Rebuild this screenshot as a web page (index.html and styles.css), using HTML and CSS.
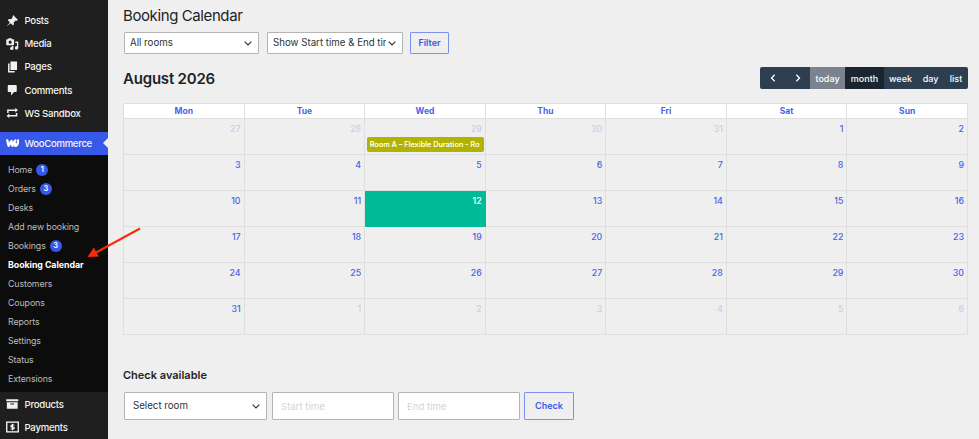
FILE: index.html
```
<!DOCTYPE html>
<html lang="en">
<head>
  <meta charset="UTF-8" />
  <meta name="viewport" content="width=device-width, initial-scale=1.0"/>
  <title>Booking Calendar</title>
  <link rel="stylesheet" href="styles.css">
</head>
<body>
  <aside class="sidebar">
    <ul class="menu">
      <li><a href="#"><svg viewBox="0 0 20 20"><path d="M10.400 3l1-2.900 8.300 8.300-2.900 1-1.100-.2-3.300 3.300.3 3.300-1.300 1.900-4.100-4.100L.5 19.300l5.500-7L2.600 8.200l1.900-1.400 3.300.3L10.600 4z"/></svg>Posts</a></li>
      <li><a href="#"><svg viewBox="0 0 20 20"><path fill-rule="evenodd" d="M1 2h2l1-1.700h4.500L9.500 2H12c.6 0 1 .4 1 1v8c0 .6-.4 1-1 1H1c-.6 0-1-.4-1-1V3c0-.6.4-1 1-1zM6.500 4.300a2.600 2.600 0 1 0 0 5.200 2.600 2.600 0 0 0 0-5.200z"/><path d="M15 6h5v10.500a2.800 2.800 0 1 1-2.200-2.700V8.500H15z"/><path d="M9.500 13.500H12v3.700a2.800 2.800 0 1 1-2.500-2.700z"/></svg>Media</a></li>
      <li><a href="#"><svg viewBox="0 0 20 20"><path d="M7 1h11v14H7zM3 4h2.500v12.500H14V19H3z"/></svg>Pages</a></li>
      <li><a href="#"><svg viewBox="0 0 20 20"><path d="M4.500 1.500h11c1.100 0 2 .9 2 2v8c0 1.100-.9 2-2 2H13L8 19v-5.500H4.500c-1.100 0-2-.9-2-2v-8c0-1.100.9-2 2-2z"/></svg>Comments</a></li>
      <li><a href="#"><svg viewBox="0 0 20 20"><path d="M1.500 10V4H15V1.500l4.500 3.700L15 9V6.500H4V10zM18.500 10v6H5v2.500L.5 14.800 5 11v2.500h11V10z"/></svg>WS Sandbox</a></li>
      <li class="current"><a href="#"><svg class="woo" viewBox="0 0 26 16"><path d="M2.500 2.500L5 13l5.500-9.500L12.500 13C13.500 8 15.500 4.500 18 2.500" fill="none" stroke="#fff" stroke-width="4.500" stroke-linejoin="round" stroke-linecap="round"/><path d="M23.500 2.500c0 5-2 9.500-4.500 10.500-1.800.4-2.200-2-1.200-5" fill="none" stroke="#fff" stroke-width="4.500" stroke-linecap="round"/></svg>WooCommerce</a></li>
    </ul>
    <ul class="submenu">
      <li><a href="#">Home <span class="count">1</span></a></li>
      <li><a href="#">Orders <span class="count">3</span></a></li>
      <li><a href="#">Desks</a></li>
      <li><a href="#">Add new booking</a></li>
      <li><a href="#">Bookings <span class="count">3</span></a></li>
      <li class="active"><a href="#">Booking Calendar</a></li>
      <li><a href="#">Customers</a></li>
      <li><a href="#">Coupons</a></li>
      <li><a href="#">Reports</a></li>
      <li><a href="#">Settings</a></li>
      <li><a href="#">Status</a></li>
      <li><a href="#">Extensions</a></li>
    </ul>
    <ul class="menu menu-bottom">
      <li><a href="#"><svg viewBox="0 0 20 20"><path fill-rule="evenodd" d="M0 2h20v3.500H0zM1 7h18v11H1zM7 9v2h6V9z"/></svg>Products</a></li>
      <li><a href="#"><svg class="pay" viewBox="0 0 14 12"><path d="M.8.8h12.400v10.400H.8z" fill="none" stroke="#fff" stroke-width="1.400"/><path d="M9 3.800H6.300Q5.200 3.800 5.200 4.900T6.300 6h1.500Q8.900 6 8.900 7.100T7.800 8.200H5M7 2.600v6.800" fill="none" stroke="#fff" stroke-width="1.200"/></svg>Payments</a></li>
    </ul>
  </aside>

  <main class="content">
    <h1>Booking Calendar</h1>

    <form class="filters">
      <div class="select">
        <select><option>All rooms</option></select>
        <svg viewBox="0 0 8 5"><path d="M.7.7L4 4 7.300.7"/></svg>
      </div>
      <div class="select select-wide">
        <select><option>Show Start time &amp; End time</option></select>
        <svg viewBox="0 0 8 5"><path d="M.7.7L4 4 7.300.7"/></svg>
      </div>
      <button type="button" class="btn">Filter</button>
    </form>

    <div class="toolbar">
      <h2>August 2026</h2>
      <div class="btn-group">
        <button class="nav"><svg viewBox="0 0 6 8"><path d="M4.700.8L1.500 4l3.200 3.200"/></svg></button>
        <button class="nav"><svg viewBox="0 0 6 8"><path d="M1.300.8L4.500 4 1.300 7.200"/></svg></button>
        <button class="today-btn">today</button>
        <button class="month-btn">month</button>
        <button class="week-btn">week</button>
        <button class="day-btn">day</button>
        <button class="list-btn">list</button>
      </div>
    </div>

    <table class="calendar">
      <thead>
        <tr><th>Mon</th><th>Tue</th><th>Wed</th><th>Thu</th><th>Fri</th><th>Sat</th><th>Sun</th></tr>
      </thead>
      <tbody>
        <tr>
          <td class="other">27</td><td class="other">28</td>
          <td><span class="muted">29</span><div class="event"><div class="event-title">Room A – Flexible Duration - Ro</div></div></td>
          <td class="other">30</td><td class="other">31</td><td>1</td><td>2</td>
        </tr>
        <tr><td>3</td><td>4</td><td>5</td><td>6</td><td>7</td><td>8</td><td>9</td></tr>
        <tr><td>10</td><td>11</td><td class="today">12</td><td>13</td><td>14</td><td>15</td><td>16</td></tr>
        <tr><td>17</td><td>18</td><td>19</td><td>20</td><td>21</td><td>22</td><td>23</td></tr>
        <tr><td>24</td><td>25</td><td>26</td><td>27</td><td>28</td><td>29</td><td>30</td></tr>
        <tr><td>31</td><td class="other">1</td><td class="other">2</td><td class="other">3</td><td class="other">4</td><td class="other">5</td><td class="other">6</td></tr>
      </tbody>
    </table>

    <h3>Check available</h3>
    <form class="check-form">
      <div class="select">
        <select><option>Select room</option></select>
        <svg viewBox="0 0 8 5"><path d="M.7.7L4 4 7.300.7"/></svg>
      </div>
      <input type="text" placeholder="Start time" />
      <input type="text" placeholder="End time" />
      <button type="button" class="btn">Check</button>
    </form>
  </main>

  <!-- arrow pointing at the active submenu item -->
  <svg class="arrow" viewBox="0 0 54 32"><path d="M53 1.500L9 25.500" stroke="#fc2a0a" stroke-width="2"/><path d="M.5 30l6.300-9.500 5 9z" fill="#fc2a0a"/></svg>
</body>
</html>
```
FILE: styles.css
```
* {
  margin: 0;
  padding: 0;
  box-sizing: border-box;
}

body {
  display: flex;
  position: relative;
  height: 439px;
  overflow: hidden;
  background: #efefef;
  color: #1d2327;
  font-family: Inter, sans-serif;
}

ul {
  list-style: none;
}

a {
  color: inherit;
  text-decoration: none;
}

button, input, select {
  font-family: inherit;
}

.sidebar {
  width: 108px;
  flex: none;
  background: #1f1f1f;
  color: #f4f4f4;
}

.menu {
  padding-top: 9px;
}

.menu a {
  display: flex;
  align-items: center;
  gap: 6px;
  height: 23.2px;
  padding-left: 6px;
  font-size: 9.6px;
  font-weight: 500;
  letter-spacing: -0.25px;
}

.menu svg {
  width: 12.5px;
  height: 12px;
  fill: #f0f0f0;
}

.menu .woo {
  width: 13.5px;
  height: 8.5px;
  margin: 0 -0.5px;
}

.menu .pay {
  width: 13px;
  margin-right: -0.5px;
}

.menu .current {
  position: relative;
  margin-top: 7px;
  background: #3858e9;
}

.menu .current a {
  letter-spacing: -0.32px;
}

.menu .current::after {
  content: "";
  position: absolute;
  right: 0;
  top: 6px;
  border: 5.5px solid transparent;
  border-right-color: #efefef;
  border-left: 0;
}

.submenu {
  height: 237px;
  padding: 5px 0 4px 8px;
  background: #0c0c0c;
  color: #bdbdbd;
}

.submenu a {
  display: flex;
  align-items: center;
  gap: 4px;
  height: 19.03px;
  font-size: 8.8px;
  letter-spacing: -0.1px;
}

.submenu .active {
  color: #fff;
  font-weight: 700;
}

.submenu .active a {
  letter-spacing: -0.04px;
}

.count {
  width: 12px;
  height: 12px;
  border-radius: 50%;
  background: #3858e9;
  color: #fff;
  font-size: 7.5px;
  font-weight: 600;
  line-height: 12px;
  letter-spacing: 0;
  text-align: center;
}

.menu-bottom {
  padding-top: 0.5px;
}

.content {
  flex: 1;
  padding: 6px 11px 0 15px;
}

h1 {
  height: 26px;
  font-size: 15px;
  font-weight: 400;
  line-height: 20px;
  letter-spacing: -0.4px;
}

.filters {
  display: flex;
  gap: 8px;
  padding-left: 1px;
}

.select {
  position: relative;
  width: 135px;
  height: 22px;
}

.select-wide {
  width: 136px;
}

.select select {
  display: block;
  width: 100%;
  height: 100%;
  padding: 0 16px 1px 5px;
  border: 1px solid #b4b4b4;
  border-radius: 1px;
  background: #fff;
  color: #2c3338;
  font-size: 9.7px;
  appearance: none;
}

.select svg {
  position: absolute;
  right: 7px;
  top: 50%;
  width: 8px;
  height: 5px;
  margin-top: -2px;
  fill: none;
  stroke: #333;
  stroke-width: 1.2;
}

.btn {
  width: 39px;
  padding-bottom: 1px;
  border: 1px solid #7c91f0;
  border-radius: 1px;
  background: transparent;
  color: #3858e9;
  font-size: 9px;
  font-weight: 600;
}

.filters .btn {
  margin-left: -1px;
}

.toolbar {
  display: flex;
  justify-content: space-between;
  align-items: center;
  height: 22px;
  margin: 13px 0 14px;
}

h2 {
  font-size: 15px;
  font-weight: 600;
  letter-spacing: -0.2px;
}

.btn-group {
  display: flex;
  height: 22px;
  border-radius: 2px;
  overflow: hidden;
}

.btn-group button {
  border: 0;
  background: #2c3e50;
  color: #fff;
  font-size: 9px;
  font-weight: 500;
}

.btn-group .nav {
  width: 25px;
}

.nav svg {
  width: 6px;
  height: 8px;
  margin-top: 1px;
  fill: none;
  stroke: #fff;
  stroke-width: 1.3;
}

.btn-group .today-btn {
  width: 35px;
  background: #7c838e;
}

.btn-group .month-btn {
  width: 39px;
  background: #1a252f;
}

.week-btn {
  width: 33px;
}

.day-btn {
  width: 27px;
}

.list-btn {
  width: 24px;
}

.calendar {
  width: 845px;
  border-collapse: collapse;
  table-layout: fixed;
}

.calendar th,
.calendar td {
  border: 1px solid #dfdfdf;
  color: #4663e9;
}

.calendar th {
  height: 15px;
  background: #fff;
  font-size: 8.5px;
  font-weight: 700;
  line-height: 14px;
}

.calendar td {
  height: 36px;
  padding: 3.5px 3px 0 1.5px;
  font-size: 8.8px;
  font-weight: 500;
  line-height: 11px;
  text-align: right;
  vertical-align: top;
}

.calendar .other,
.muted {
  color: #c8cdf0;
}

.calendar .today {
  background: #00bb98;
  border-color: #00bb98;
  color: #fff;
}

.event {
  height: 15px;
  margin: 3.5px -2px -1px 0;
  padding: 0 3px;
  border-radius: 2px;
  background: #b0b300;
  color: #fff;
  font-size: 7.3px;
  font-weight: 600;
  line-height: 15px;
  text-align: left;
}

.event-title {
  white-space: nowrap;
  overflow: hidden;
}

h3 {
  margin: 33px 0 9px;
  font-size: 11px;
  font-weight: 600;
  line-height: 15px;
}

.check-form {
  display: flex;
  gap: 4px;
  padding-left: 1px;
}

.check-form .select {
  width: 143px;
  height: 28px;
  margin-right: 1px;
}

.check-form select {
  padding-left: 8px;
}

.check-form input {
  width: 122px;
  padding: 1px 8px 0;
  border: 1px solid #b4b4b4;
  border-radius: 1px;
  background: #fff;
  font-size: 9.6px;
}

.check-form input::placeholder {
  color: #d4d4d4;
}

.check-form .btn {
  width: 50px;
}

.arrow {
  position: absolute;
  left: 87px;
  top: 227px;
  width: 54px;
  height: 32px;
}
```
